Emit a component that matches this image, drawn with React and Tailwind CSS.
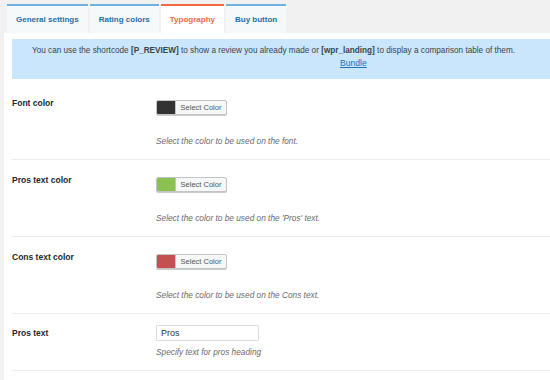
import React from 'react';

const tabs = [
  { label: 'General settings', active: false },
  { label: 'Rating colors', active: false },
  { label: 'Typography', active: true },
  { label: 'Buy button', active: false },
];

const colorRows = [
  { label: 'Font color', color: 'bg-[#333333]', desc: 'Select the color to be used on the font.' },
  { label: 'Pros text color', color: 'bg-[#8bc152]', desc: "Select the color to be used on the 'Pros' text." },
  { label: 'Cons text color', color: 'bg-[#c64f4f]', desc: 'Select the color to be used on the Cons text.' },
];

const ColorButton = ({ color }) => (
  <div className="flex h-[15px] w-[71px] overflow-hidden rounded-[2px] border border-[#c3c4c7] bg-[#f6f7f7] shadow-[0_1px_0_#ccc]">
    <span className={`w-[19px] border-r border-[#c3c4c7] ${color}`} />
    <span className="flex flex-1 items-center justify-center text-[7.5px] text-[#555]">Select Color</span>
  </div>
);

const App = () => {
  return (
    <div className="h-[380px] w-[550px] overflow-hidden bg-[#f1f1f1] font-['Liberation_Sans',Arial,sans-serif] text-[#23282d]">
      {/* Tabs */}
      <div className="flex h-[33px] gap-[2px] pl-[7px] pt-[4px]">
        {tabs.map((tab) => (
          <div
            key={tab.label}
            className={`flex items-center border-t-2 px-[9px] text-[8px] font-bold ${
              tab.active
                ? 'border-[#f26a3d] bg-white text-[#f26a3d]'
                : 'border-[#6fb0e3] bg-[#f5f9fa] text-[#1e6fa3]'
            }`}
          >
            {tab.label}
          </div>
        ))}
      </div>

      {/* Panel */}
      <div className="ml-[4px] h-full bg-white pl-[8px] pt-[6px]">
        <div className="h-[40px] bg-[#c9e6fc] pt-[5px] text-[8.2px] leading-[13px] text-[#3c434a]">
          <div className="whitespace-nowrap pl-[20px]">
            You can use the shortcode <b>[P_REVIEW]</b> to show a review you already made or <b>[wpr_landing]</b> to display a comparison table of them.
          </div>
          <div className="pl-[328px] text-[8.6px]">
            <a href="#" className="text-[#2271b1] underline">Bundle</a>
          </div>
        </div>

        {colorRows.map((row, i) => (
          <div
            key={row.label}
            className={`flex border-b border-[#ececec] pb-[12px] ${i === 0 ? 'pt-[21px]' : 'pt-[17px]'}`}
          >
            <div className="w-[144px] -mt-[3px] text-[8.5px] font-bold leading-[12px]">{row.label}</div>
            <div>
              <ColorButton color={row.color} />
              <p className="mt-[20px] text-[8.3px] italic leading-[12px] text-[#6b6b6b]">{row.desc}</p>
            </div>
          </div>
        ))}

        <div className="flex border-b border-[#ececec] pb-[12px] pt-[11px]">
          <div className="w-[144px] pt-[2px] text-[8.5px] font-bold leading-[12px]">Pros text</div>
          <div>
            <input
              type="text"
              defaultValue="Pros"
              className="block h-[16px] w-[103px] rounded-[1px] border border-[#dcdcde] px-[4px] text-[9px] text-[#2c3338] outline-none"
            />
            <p className="mt-[5px] text-[8.3px] italic leading-[12px] text-[#6b6b6b]">Specify text for pros heading</p>
          </div>
        </div>
      </div>
    </div>
  );
};

export default App;
